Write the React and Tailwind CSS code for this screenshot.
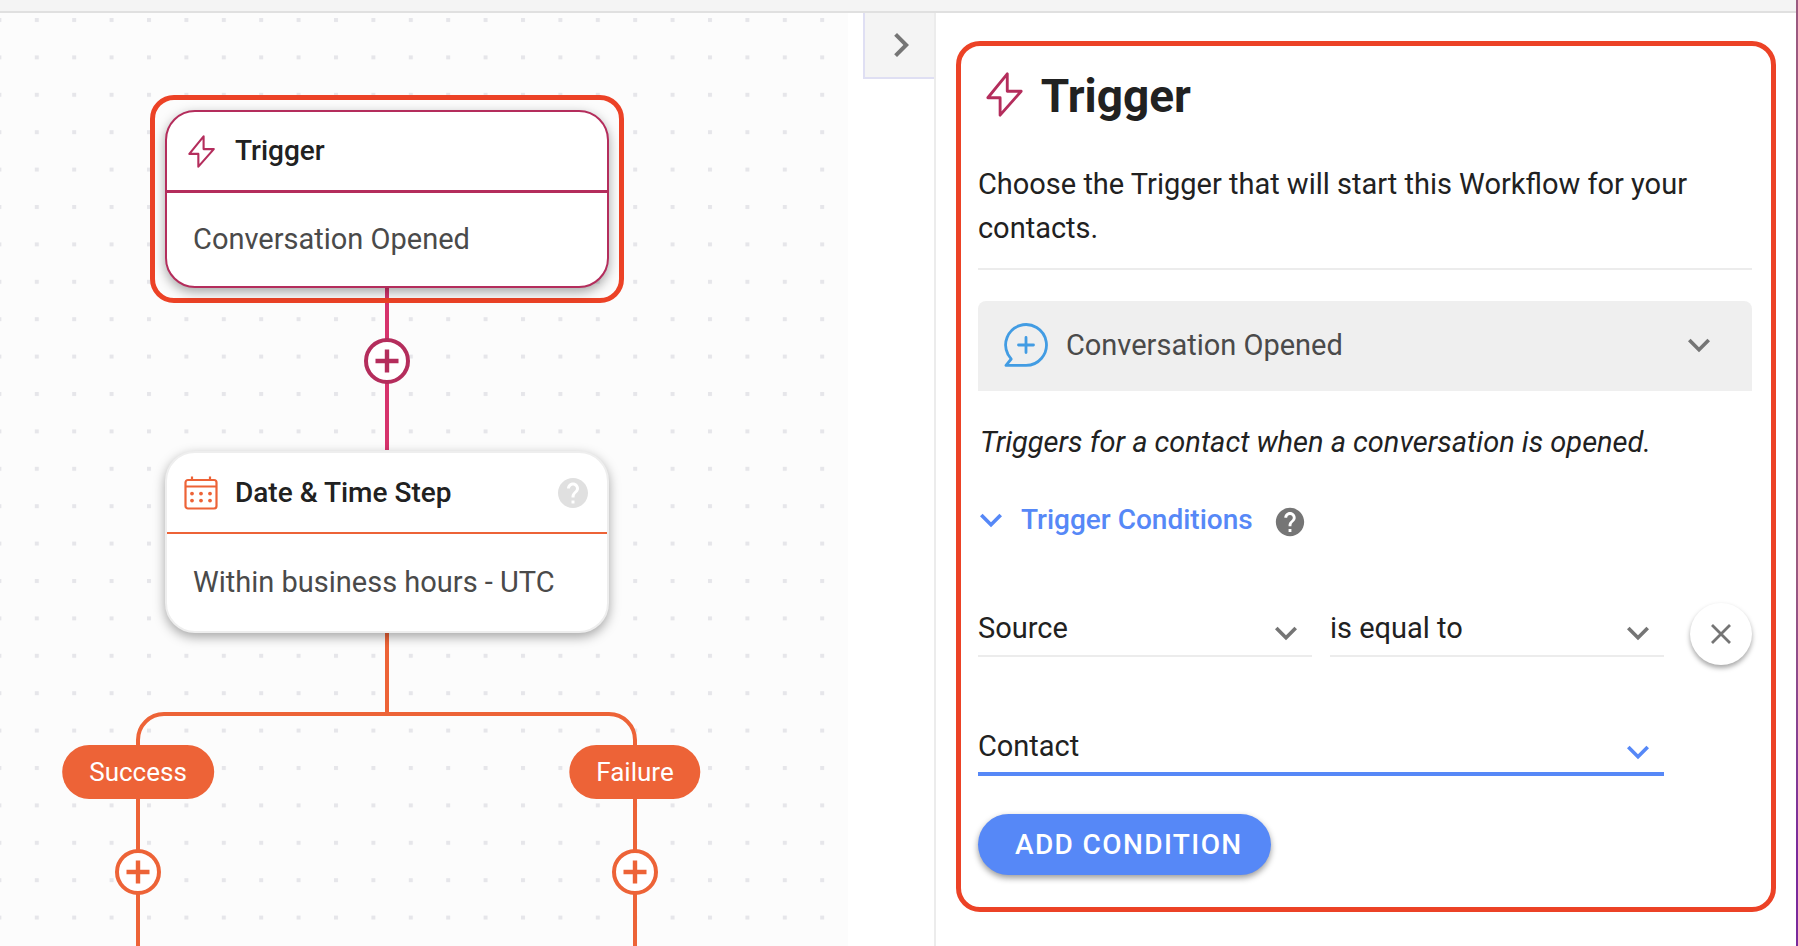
import { useState } from 'react';
import { MdHelp, MdKeyboardArrowDown, MdKeyboardArrowRight } from 'react-icons/md';

const BoltIcon = ({ className }) => (
  <svg viewBox="0 0 36 44" className={className} fill="none" stroke="currentColor" strokeWidth="2.8" strokeLinejoin="round">
    <path d="M20.8 1.8V18.8H34.4L13.8 42.2V25.2H1.8Z" />
  </svg>
);

const CalendarIcon = ({ className }) => (
  <svg viewBox="0 0 34 34" className={className} fill="none" stroke="currentColor" strokeWidth="2.2">
    <rect x="1.5" y="4" width="31" height="28.5" rx="2.5" />
    <path d="M1.5 10.5H32.5M8 .5V4M26 .5V4" />
    <g fill="currentColor" stroke="none">
      {[8, 17, 26].map((x) => (
        <g key={x}>
          <circle cx={x} cy="17.6" r="1.9" />
          <circle cx={x} cy="24.6" r="1.9" />
        </g>
      ))}
    </g>
  </svg>
);

const BubbleIcon = ({ className }) => (
  <svg viewBox="0 0 44 44" className={className} fill="none" stroke="currentColor" strokeWidth="2.8" strokeLinejoin="round" strokeLinecap="round">
    <path d="M2 42.4H22A20.4 20.4 0 1 0 4 31.5L7.2 36Z" />
    <path d="M22 14.5V29.5M14.5 22H29.5" />
  </svg>
);

const PlusIcon = () => (
  <svg viewBox="0 0 24 24" className="size-6" stroke="currentColor" strokeWidth="4.4">
    <path d="M12 .5V23.5M.5 12H23.5" />
  </svg>
);

const CloseIcon = () => (
  <svg viewBox="0 0 20 20" className="size-5" stroke="currentColor" strokeWidth="2.8">
    <path d="M1 1L19 19M19 1L1 19" />
  </svg>
);

// free canvas with the dotted grid and the lines between the nodes
const Connectors = () => (
  <svg className="absolute inset-0 h-full w-full" fill="none" strokeWidth="4">
    <defs>
      <pattern id="dots" x="34.8" y="5" width="37.4" height="37.4" patternUnits="userSpaceOnUse">
        <rect width="4" height="4" fill="#e6e6ea" />
      </pattern>
    </defs>
    <rect width="100%" height="100%" fill="url(#dots)" />
    <path d="M387 272V437" stroke="#d6336c" />
    <g stroke="#ed6337">
      <path d="M387 618V701" />
      <path d="M138 2000V727A26 26 0 0 1 164 701H609A26 26 0 0 1 635 727V2000" />
    </g>
  </svg>
);

function Node({ icon, title, body, help, className, headerClass, bodyClass }) {
  return (
    <div className={`w-[444px] rounded-[30px] border-2 bg-white shadow-[0_4px_12px_rgba(0,0,0,0.35)] ${className}`}>
      <div className={`flex h-[81px] items-center px-4 ${headerClass}`}>
        <span className="flex w-9 justify-center">{icon}</span>
        <h2 className="ml-4 flex-1 text-[28px] font-medium text-[#212121]">{title}</h2>
        {help && (
          <button type="button" aria-label="Help" className="text-[#e0e0e0]">
            <MdHelp className="size-9" />
          </button>
        )}
      </div>
      <p className={`flex items-center px-[26px] text-[29px] text-[#4a4a4a] ${bodyClass}`}>{body}</p>
    </div>
  );
}

const AddButton = ({ className }) => (
  <button
    type="button"
    aria-label="Add step"
    className={`absolute flex size-[46px] -translate-x-1/2 items-center justify-center rounded-full border-4 bg-white ${className}`}
  >
    <PlusIcon />
  </button>
);

const Branch = ({ label, className }) => (
  <div className={`absolute top-[732px] -translate-x-1/2 rounded-full bg-[#ed6337] px-[27px] py-2 text-[26px] leading-[38px] text-white ${className}`}>
    {label}
  </div>
);

function Field({ label, options, active }) {
  return (
    <div className="relative flex-1">
      <select
        aria-label={label}
        className={`block h-[54px] w-full appearance-none bg-transparent pr-12 text-[29px] text-[#212121] outline-none ${
          active ? 'border-b-4 border-[#5688f7]' : 'border-b-2 border-[#ececec]'
        }`}
      >
        {options.map((o) => (
          <option key={o}>{o}</option>
        ))}
      </select>
      <MdKeyboardArrowDown
        className={`pointer-events-none absolute right-1 bottom-0.5 size-11 ${active ? 'text-[#5688f7]' : 'text-[#757575]'}`}
      />
    </div>
  );
}

export default function App() {
  const [panelOpen, setPanelOpen] = useState(true);
  const [showConditions, setShowConditions] = useState(true);

  return (
    <div className="flex min-h-screen bg-white font-[Roboto,sans-serif] text-[#212121]">
      <div className="flex min-w-0 flex-1 flex-col">
        <header className="h-[13px] border-b-2 border-[#e0e0e0] bg-[#f4f4f4]" />

        <div className="flex flex-1">
          {/* Canvas */}
          <main className="relative flex-1 overflow-hidden bg-[#fcfcfc]">
            <Connectors />
            <div className="absolute top-[82px] left-[150px] rounded-3xl border-[5px] border-[#ec4226] p-[10px]">
              <Node
                icon={<BoltIcon className="h-[33px]" />}
                title="Trigger"
                body="Conversation Opened"
                className="border-[#b42d5c] text-[#b42d5c]"
                headerClass="border-b-3 border-[#b42d5c]"
                bodyClass="h-[93px]"
              />
            </div>
            <AddButton className="top-[325px] left-[387px] border-[#b42d5c] text-[#b42d5c]" />
            <Node
              icon={<CalendarIcon className="size-[34px]" />}
              title="Date & Time Step"
              body="Within business hours - UTC"
              help
              className="absolute top-[438px] left-[165px] border-[#eeeeee] text-[#ed6337]"
              headerClass="border-b-2 border-[#ed6337]"
              bodyClass="h-[97px]"
            />
            <Branch label="Success" className="left-[138px]" />
            <Branch label="Failure" className="left-[635px]" />
            <AddButton className="top-[836px] left-[138px] border-[#ed6337] text-[#ed6337]" />
            <AddButton className="top-[836px] left-[635px] border-[#ed6337] text-[#ed6337]" />
          </main>

          <div className="pl-[15px]">
            <button
              type="button"
              aria-label="Toggle panel"
              onClick={() => setPanelOpen(!panelOpen)}
              className="flex h-[66px] w-[71px] items-center justify-center border-b-2 border-l-2 border-[#dfdff3] bg-[#f4f4f4] pl-1 text-[#757575]"
            >
              <MdKeyboardArrowRight className="size-12" />
            </button>
          </div>

          {/* Settings panel */}
          {panelOpen && (
            <aside className="w-[48%] border-l-2 border-[#ececec] pt-7 pr-5 pb-8 pl-5">
              <div className="rounded-3xl border-[5px] border-[#ec4226] pt-4 pr-[19px] pb-8 pl-[17px]">
                <div className="flex h-[68px] items-center pl-2">
                  <BoltIcon className="mb-1 h-[45px] text-[#b42d5c]" />
                  <h1 className="ml-[18px] text-[46px] font-bold">Trigger</h1>
                </div>
                <p className="mt-8 border-b-2 border-[#ececec] pb-[18px] text-[29px] leading-[44px]">
                  Choose the Trigger that will start this Workflow for your contacts.
                </p>

                <div className="relative mt-[31px]">
                  <BubbleIcon className="pointer-events-none absolute top-[22px] left-[26px] size-11 text-[#429ce3]" />
                  <select
                    aria-label="Trigger type"
                    className="block h-[90px] w-full appearance-none rounded-t-lg bg-[#efefef] pr-20 pl-[88px] text-[29px] text-[#4a4a4a] outline-none"
                  >
                    <option>Conversation Opened</option>
                    <option>Conversation Closed</option>
                  </select>
                  <MdKeyboardArrowDown className="pointer-events-none absolute top-[22px] right-[31px] size-11 text-[#757575]" />
                </div>

                <p className="mt-[29px] pl-0.5 text-[29px] leading-[44px] italic">
                  Triggers for a contact when a conversation is opened.
                </p>

                <div className="mt-[33px] flex h-[46px] items-center">
                  <button
                    type="button"
                    aria-expanded={showConditions}
                    onClick={() => setShowConditions(!showConditions)}
                    className="flex items-center text-[28px] font-medium text-[#5688f7]"
                  >
                    <MdKeyboardArrowDown className="-ml-[9px] size-11" />
                    <span className="ml-2">Trigger Conditions</span>
                  </button>
                  <button type="button" aria-label="About conditions" className="ml-5 pt-1 text-[#757575]">
                    <MdHelp className="size-[34px]" />
                  </button>
                </div>

                {showConditions && (
                  <>
                    <div className="mt-[60px] flex items-end gap-[18px]">
                      <Field label="Property" options={['Source', 'Channel']} />
                      <Field label="Operator" options={['is equal to', 'is not equal to']} />
                      <button
                        type="button"
                        aria-label="Remove condition"
                        className="-mb-2 ml-2 flex size-[62px] items-center justify-center rounded-full bg-white text-[#757575] shadow-[0_3px_5px_rgba(0,0,0,0.35)]"
                      >
                        <CloseIcon />
                      </button>
                    </div>
                    <div className="mt-[65px] flex pr-[88px]">
                      <Field label="Value" options={['Contact', 'User']} active />
                    </div>
                    <button
                      type="button"
                      className="mt-[38px] h-[61px] rounded-full bg-[#5688f7] pr-7 pl-[37px] text-[28px] font-medium tracking-wider text-white uppercase shadow-[0_3px_6px_rgba(0,0,0,0.4)]"
                    >
                      Add condition
                    </button>
                  </>
                )}
              </div>
            </aside>
          )}
        </div>
      </div>
      <div className="w-[2px] bg-linear-to-b from-[#9b5a80] from-60% to-[#7a2a9b] to-90%" />
    </div>
  );
}
